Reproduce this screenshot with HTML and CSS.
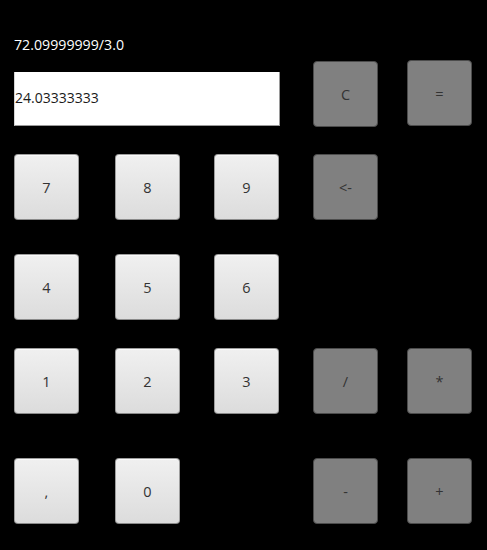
FILE: index.html
```html
<!DOCTYPE html>
<html>
<head>
<meta charset="utf-8">
<link rel="stylesheet" href="styles.css">
</head>
<body>
<div class="app">
  <div class="expr">72.09999999/3.0</div>
  <div class="pad">
    <div class="display">24.03333333</div>
    <button class="key op c4">C</button>
    <button class="key op c5">=</button>

    <button class="key num">7</button>
    <button class="key num">8</button>
    <button class="key num">9</button>
    <button class="key op">&lt;-</button>
    <span class="empty"></span>

    <button class="key num">4</button>
    <button class="key num">5</button>
    <button class="key num">6</button>
    <span class="empty"></span>
    <span class="empty"></span>

    <button class="key num">1</button>
    <button class="key num">2</button>
    <button class="key num">3</button>
    <button class="key op">/</button>
    <button class="key op">*</button>

    <button class="key num">,</button>
    <button class="key num">0</button>
    <span class="empty"></span>
    <button class="key op">-</button>
    <button class="key op">+</button>
  </div>
</div>
</body>
</html>
```

FILE: styles.css
```css
html, body {
  margin: 0;
  padding: 0;
  background: #000;
  width: 487px;
  height: 550px;
  overflow: hidden;
}
.app {
  padding: 35px 0 0 14px;
  font-family: "Open Sans", "Noto Sans", sans-serif;
}
.expr {
  color: #fff;
  font-size: 14.2px;
  line-height: 20px;
  height: 20px;
}
.pad {
  margin-top: 6px;
  display: grid;
  grid-template-columns: 101px 99px 99px 94px 66px;
  grid-template-rows: 93px 100px 94px 110px 66px;
}
.display {
  grid-column: 1 / span 3;
  align-self: start;
  margin-top: 11px;
  width: 266px;
  height: 54px;
  box-sizing: border-box;
  background: #fff;
  border-left: 1px solid #d4d4d4;
  border-right: 1px solid #9a9a9a;
  border-bottom: 1px solid #9a9a9a;
  color: #1a1a1a;
  font-size: 14px;
  line-height: 52px;
  padding-left: 0;
}
.key {
  width: 65px;
  height: 66px;
  box-sizing: border-box;
  border-radius: 4px;
  font-family: "Open Sans", "Noto Sans", sans-serif;
  font-size: 14.5px;
  color: #333;
  padding: 0;
  margin: 0;
  align-self: start;
}
.num {
  background: linear-gradient(#f0f0f0, #dcdcdc);
  border: 1px solid #9e9e9e;
  border-bottom-color: #8a8a8a;
  box-shadow: inset 0 1px 0 #fafafa;
}
.op {
  background: #808080;
  border: 1px solid #4c4c4c;
}
.c5 {
  margin-top: -1px;
}
```
